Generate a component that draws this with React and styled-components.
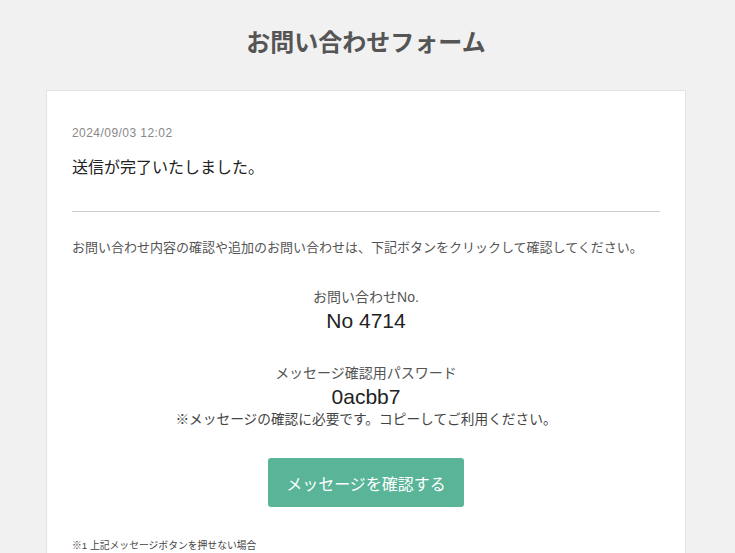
import React from "react";
import styled, { createGlobalStyle } from "styled-components";

const GlobalStyle = createGlobalStyle`
  body {
    margin: 0;
    padding-right: 3px;
    background: #f1f1f1;
    font-family: "Liberation Sans", "Noto Sans CJK JP", sans-serif;
    color: #333;
  }
`;

const Page = styled.div`
  width: 640px;
  margin: 0 auto;
  padding-top: 25px;
`;

const Title = styled.h1`
  margin: 0;
  font-size: 24px;
  line-height: 36px;
  font-weight: bold;
  color: #555;
  text-align: center;
`;

const Card = styled.div`
  box-sizing: border-box;
  margin-top: 29px;
  background: #fff;
  border: 1px solid #e2e2e2;
  padding: 34px 25px 0;
  min-height: 470px;
`;

const Stamp = styled.div`
  font-size: 12px;
  letter-spacing: 0.45px;
  line-height: 17px;
  color: #888;
`;

const Done = styled.p`
  margin: 14px 0 0;
  font-size: 16px;
  line-height: 24px;
  color: #222;
`;

const Divider = styled.hr`
  margin: 31px 0 0;
  border: 0;
  border-top: 1px solid #ccc;
`;

const Lead = styled.p`
  margin: 26px 0 0;
  font-size: 13px;
  line-height: 20px;
  color: #555;
`;

const Field = styled.div`
  margin-top: ${(p) => p.$gap}px;
  text-align: center;
`;

const Label = styled.div`
  font-size: 14px;
  line-height: 20px;
  color: #555;
`;

const Value = styled.div`
  margin-top: 1px;
  font-size: 21px;
  line-height: 25px;
  color: #222;
`;

const Note = styled.div`
  font-size: 13.7px;
  line-height: 21px;
  color: #444;
`;

const Actions = styled.div`
  margin-top: 28px;
  display: flex;
  justify-content: center;
`;

const Button = styled.button`
  width: 196px;
  height: 49px;
  border: 0;
  border-radius: 3px;
  background: #59b498;
  color: #fff;
  font-family: inherit;
  font-size: 16px;
  cursor: pointer;
`;

const Foot = styled.p`
  margin: 31px 0 0;
  font-size: 9.8px;
  line-height: 15px;
  color: #444;
`;

export default function App() {
  return (
    <>
      <GlobalStyle />
      <Page>
        <Title>お問い合わせフォーム</Title>
        <Card>
          <Stamp>2024/09/03 12:02</Stamp>
          <Done>送信が完了いたしました。</Done>
          <Divider />
          <Lead>
            お問い合わせ内容の確認や追加のお問い合わせは、下記ボタンをクリックして確認してください。
          </Lead>
          <Field $gap={29}>
            <Label>お問い合わせNo.</Label>
            <Value>No 4714</Value>
          </Field>
          <Field $gap={30}>
            <Label>メッセージ確認用パスワード</Label>
            <Value>0acbb7</Value>
            <Note>※メッセージの確認に必要です。コピーしてご利用ください。</Note>
          </Field>
          <Actions>
            <Button>メッセージを確認する</Button>
          </Actions>
          <Foot>※1 上記メッセージボタンを押せない場合</Foot>
        </Card>
      </Page>
    </>
  );
}
